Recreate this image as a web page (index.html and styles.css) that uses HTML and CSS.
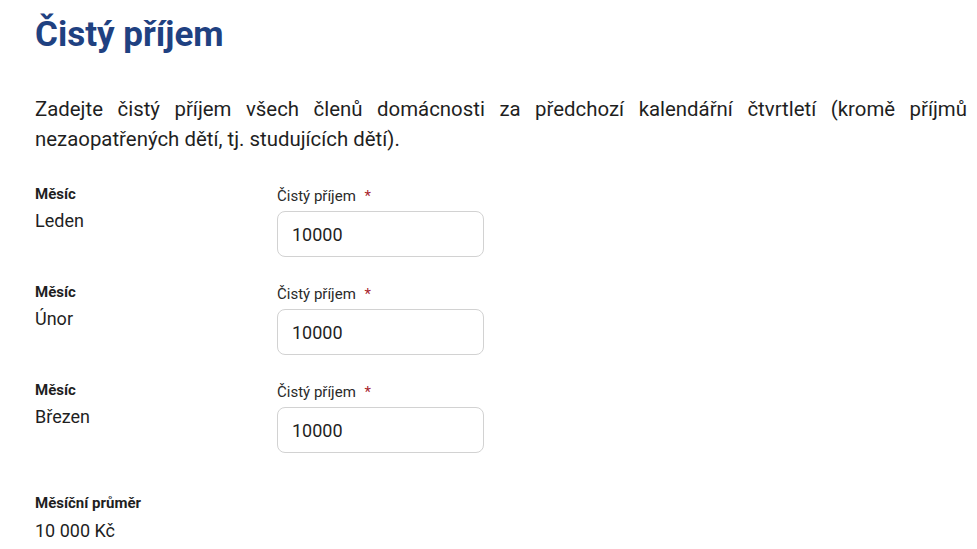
FILE: index.html
```html
<!DOCTYPE html>
<html lang="cs">
<head>
<meta charset="utf-8">
<title>Čistý příjem</title>
<link rel="stylesheet" href="styles.css">
</head>
<body>
<main class="page">
  <h1 class="title">Čistý příjem</h1>
  <p class="intro">Zadejte čistý příjem všech členů domácnosti za předchozí kalendářní čtvrtletí (kromě příjmů nezaopatřených dětí, tj. studujících dětí).</p>

  <div class="row">
    <div class="month">
      <div class="caption">Měsíc</div>
      <div class="value">Leden</div>
    </div>
    <div class="field">
      <label class="field-label">Čistý příjem <span class="req">*</span></label>
      <input class="input" type="text" value="10000">
    </div>
  </div>

  <div class="row">
    <div class="month">
      <div class="caption">Měsíc</div>
      <div class="value">Únor</div>
    </div>
    <div class="field">
      <label class="field-label">Čistý příjem <span class="req">*</span></label>
      <input class="input" type="text" value="10000">
    </div>
  </div>

  <div class="row">
    <div class="month">
      <div class="caption">Měsíc</div>
      <div class="value">Březen</div>
    </div>
    <div class="field">
      <label class="field-label">Čistý příjem <span class="req">*</span></label>
      <input class="input" type="text" value="10000">
    </div>
  </div>

  <div class="summary">
    <div class="caption">Měsíční průměr</div>
    <div class="value">10 000 Kč</div>
  </div>
</main>
</body>
</html>
```

FILE: styles.css
```css
html, body {
  margin: 0;
  padding: 0;
  background: #ffffff;
}

body {
  font-family: Roboto, "Noto Sans", sans-serif;
  color: #1f1f1f;
  overflow: hidden;
}

.page {
  width: 932px;
  padding: 14px 0 0 35px;
}

.title {
  margin: 0;
  font-size: 35px;
  line-height: 42px;
  font-weight: 700;
  color: #1f4181;
}

.intro {
  margin: 38px 0 0;
  font-size: 20.4px;
  line-height: 30px;
  text-align: justify;
  color: #1f1f1f;
}

.row {
  display: grid;
  grid-template-columns: 242px 207px;
  margin-top: 25px;
}

.intro + .row {
  margin-top: 30px;
}

.caption {
  font-size: 15px;
  line-height: 20px;
  font-weight: 700;
  color: #1f1f1f;
}

.value {
  margin-top: 4px;
  font-size: 18px;
  line-height: 26px;
  color: #1f1f1f;
}

.field {
  display: flex;
  flex-direction: column;
  padding-top: 2px;
}

.field-label {
  font-size: 15px;
  line-height: 20px;
  color: #2a2a2a;
}

.req {
  color: #a8262e;
  margin-left: 5px;
}

.input {
  box-sizing: border-box;
  margin-top: 5px;
  width: 207px;
  height: 46px;
  padding: 0 14px;
  border: 1px solid #d2d2d2;
  border-radius: 8px;
  font-family: Roboto, "Noto Sans", sans-serif;
  font-size: 18px;
  color: #1f1f1f;
  background: #ffffff;
  outline: none;
}

.summary {
  margin-top: 40px;
}

.summary .value {
  margin-top: 5px;
}
```
